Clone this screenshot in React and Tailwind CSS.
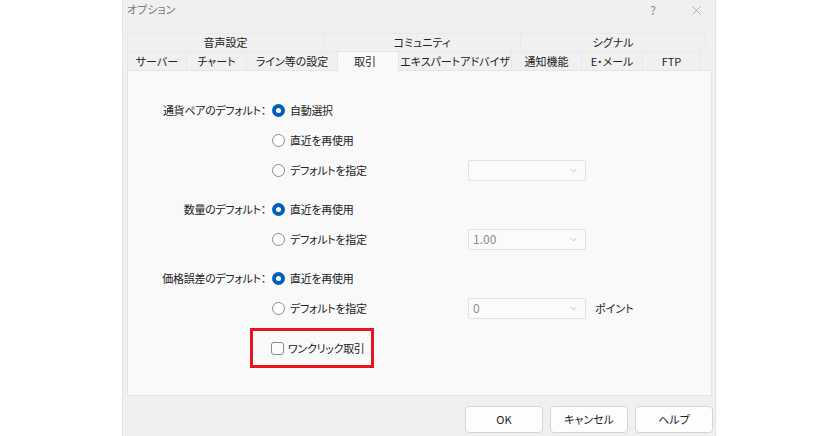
import React from 'react';
import { ChevronDown, X } from 'lucide-react';

const font = "[font-family:'Noto_Sans_CJK_JP','Noto_Sans',sans-serif] [font-feature-settings:'palt']";

const topTabs = [
  { label: '音声設定', w: 'w-[197px]' },
  { label: 'コミュニティ', w: 'w-[198px]' },
  { label: 'シグナル', w: 'w-[186px]' },
];

const tabs = [
  { label: 'サーバー', w: 'w-[60px]' },
  { label: 'チャート', w: 'w-[61px]' },
  { label: 'ライン等の設定', w: 'w-[92px]' },
  { label: '取引', w: 'w-[62px]', active: true },
  { label: 'エキスパートアドバイザ', w: 'w-[114px]' },
  { label: '通知機能', w: 'w-[71px]' },
  { label: 'E・メール', w: 'w-[62px]' },
  { label: 'FTP', w: 'w-[59px]' },
];

const Radio = ({ checked, label }) => (
  <div className="flex items-center gap-[5px] whitespace-nowrap">
    {checked ? (
      <span className="w-[13px] h-[13px] shrink-0 rounded-full bg-[#005fb8] flex items-center justify-center">
        <span className="w-[5px] h-[5px] rounded-full bg-white" />
      </span>
    ) : (
      <span className="w-[13px] h-[13px] shrink-0 rounded-full border border-[#8a8a8a] bg-[#fdfdfd]" />
    )}
    <span className="tracking-[-0.3px]">{label}</span>
  </div>
);

const Select = ({ value }) => (
  <div className="w-[118px] h-[21px] shrink-0 border border-[#e2e2e2] bg-[#fbfbfb] rounded-[2px] flex items-center justify-between pl-[4px] pr-[6px] text-[#8c8c8c] text-[12px]">
    <span>{value}</span>
    <ChevronDown className="w-[11px] h-[11px] text-[#b0b0b0]" strokeWidth={1.5} />
  </div>
);

const Row = ({ label, children, extra, suffix }) => (
  <div className="h-[30px] flex items-center whitespace-nowrap">
    <div className="w-[144px] pr-[6px] text-right shrink-0 tracking-[-0.3px]">{label}</div>
    <div className="w-[196px] shrink-0">{children}</div>
    {extra}
    {suffix && <span className="ml-[9px]">{suffix}</span>}
  </div>
);

export default function App() {
  return (
    <div className={`w-[840px] h-[436px] bg-white overflow-hidden text-[11px] text-[#222] ${font}`}>
      <div className="ml-[122px] w-[594px] h-[436px] bg-[#f0f0f0] border-x border-[#e4e4e4] flex flex-col">
        {/* title bar */}
        <div className="h-[33px] flex items-start justify-between pt-[1px] pl-[4px] pr-[11px] shrink-0">
          <span className="text-[11px] text-[#7a7a7a] leading-[16px]">オプション</span>
          <div className="flex items-center gap-[33px] text-[#8a8a8a] leading-[16px] pt-[1px]">
            <span className="text-[12px]">?</span>
            <X className="w-[15px] h-[15px]" strokeWidth={1} />
          </div>
        </div>

        {/* tabs */}
        <div className="pl-[4px] shrink-0 whitespace-nowrap leading-none">
          <div className="flex h-[18px]">
            {topTabs.map((t) => (
              <div key={t.label} className={`${t.w} border border-b-0 border-[#e8e8e8] -mr-px flex items-center justify-center`}>
                {t.label}
              </div>
            ))}
          </div>
          <div className="flex h-[19px] items-end">
            {tabs.map((t) =>
              t.active ? (
                <div key={t.label} className={`${t.w} h-[20px] bg-[#f9f9f9] border border-b-0 border-[#e5e5e5] -mr-px flex items-center justify-center relative z-10 -mb-px`}>
                  <span className="-ml-[6px] pb-[1px]">{t.label}</span>
                </div>
              ) : (
                <div key={t.label} className={`${t.w} h-[19px] border border-b-0 border-[#e8e8e8] -mr-px flex items-center justify-center`}>
                  {t.label}
                </div>
              )
            )}
          </div>
        </div>

        {/* panel */}
        <div className="ml-[4px] w-[585px] h-[326px] bg-[#f9f9f9] border border-[#e5e5e5] pt-[24px] shrink-0">
          <Row label="通貨ペアのデフォルト：">
            <Radio checked label="自動選択" />
          </Row>
          <Row label="">
            <Radio label="直近を再使用" />
          </Row>
          <Row label="" extra={<Select value="" />}>
            <Radio label="デフォルトを指定" />
          </Row>

          <div className="mt-[9px]">
            <Row label="数量のデフォルト：">
              <Radio checked label="直近を再使用" />
            </Row>
            <Row label="" extra={<Select value="1.00" />}>
              <Radio label="デフォルトを指定" />
            </Row>
          </div>

          <div className="mt-[9px]">
            <Row label="価格誤差のデフォルト：">
              <Radio checked label="直近を再使用" />
            </Row>
            <Row label="" extra={<Select value="0" />} suffix="ポイント">
              <Radio label="デフォルトを指定" />
            </Row>
          </div>

          <div className="ml-[122px] mt-[5px] w-[124px] h-[40px] border-[3px] border-[#e8141b] flex items-center pl-[18px] gap-[4px] whitespace-nowrap">
            <span className="w-[13px] h-[13px] shrink-0 rounded-[3px] border border-[#8a8a8a] bg-[#fdfdfd]" />
            <span className="tracking-[-0.3px]">ワンクリック取引</span>
          </div>
        </div>

        {/* buttons */}
        <div className="flex justify-end gap-[7px] pr-[2px] mt-[10px]">
          {['OK', 'キャンセル', 'ヘルプ'].map((b) => (
            <button key={b} className="w-[78px] h-[27px] bg-[#fdfdfd] border border-[#d5d5d5] rounded-[4px] flex items-center justify-center">
              {b}
            </button>
          ))}
        </div>
      </div>
    </div>
  );
}
